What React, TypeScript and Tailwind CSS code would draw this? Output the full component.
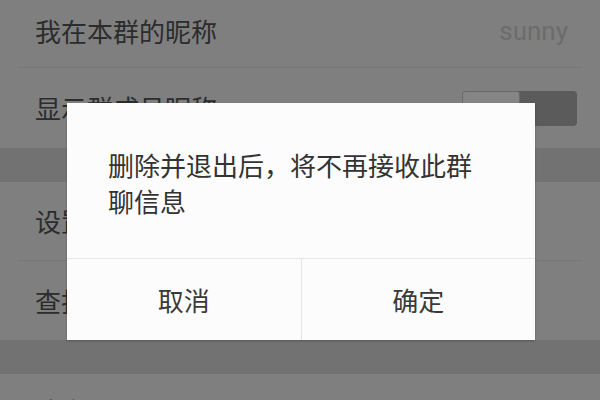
import React from "react";

const font = { fontFamily: '"Noto Sans CJK SC", "Noto Sans", sans-serif' };

function Row({ label, right, h }: { label: string; right?: React.ReactNode; h: string }) {
  return (
    <div className={`flex items-center justify-between bg-[#7f7f7f] pl-[35px] ${h}`}>
      <span className="text-[26px] leading-none text-[#2c2c2c]">{label}</span>
      {right}
    </div>
  );
}

export default function App() {
  return (
    <div className="relative h-[400px] w-[600px] overflow-hidden bg-[#7f7f7f]" style={font}>
      <div className="flex flex-col">
        <div className="flex h-[67px] items-center justify-between bg-[#7f7f7f] pb-[6px] pl-[35px] pr-[32px]">
          <span className="text-[26px] leading-none text-[#2c2c2c]">我在本群的昵称</span>
          <span className="text-[26px] leading-none text-[#6c6c6c]" style={{ fontFamily: 'Roboto, "Noto Sans", sans-serif' }}>
            sunny
          </span>
        </div>
        <div className="mx-[18px] h-px bg-[#767676]" />
        <Row
          label="显示群成员昵称"
          h="h-[80px]"
          right={
            <div className="mr-[23px] flex h-[35px] w-[115px] overflow-hidden rounded-[4px] bg-[#5b5b5b]">
              <div className="h-full w-[58px] rounded-[3px] border border-[#6a6a6a] bg-[#858585]" />
            </div>
          }
        />
        <div className="h-[34px] bg-[#727272]" />
        <Row label="设置当前聊天背景" h="h-[78px]" />
        <div className="mx-[18px] h-px bg-[#767676]" />
        <Row label="查找聊天记录" h="h-[79px]" />
        <div className="h-[34px] bg-[#727272]" />
        <div className="flex h-[40px] items-start bg-[#7f7f7f] pl-[35px] pt-[24px]">
          <span className="text-[26px] leading-none text-[#2c2c2c]">清空聊天记录</span>
        </div>
      </div>

      <div className="absolute left-[67px] top-[103px] flex h-[237px] w-[468px] flex-col bg-[#fcfcfc] shadow-[0_1px_2px_rgba(0,0,0,0.25)]">
        <div className="h-[155px] pl-[41px] pr-[45px] pt-[44px] text-[26px] leading-[36px] text-[#333333]">
          删除并退出后，将不再接收此群聊信息
        </div>
        <div className="h-px bg-[#e6e6e6]" />
        <div className="flex flex-1">
          <div className="flex flex-1 items-center justify-center text-[26px] text-[#3a3a3a]">取消</div>
          <div className="w-px bg-[#e6e6e6]" />
          <div className="flex flex-1 items-center justify-center text-[26px] text-[#3a3a3a]">确定</div>
        </div>
      </div>
    </div>
  );
}
